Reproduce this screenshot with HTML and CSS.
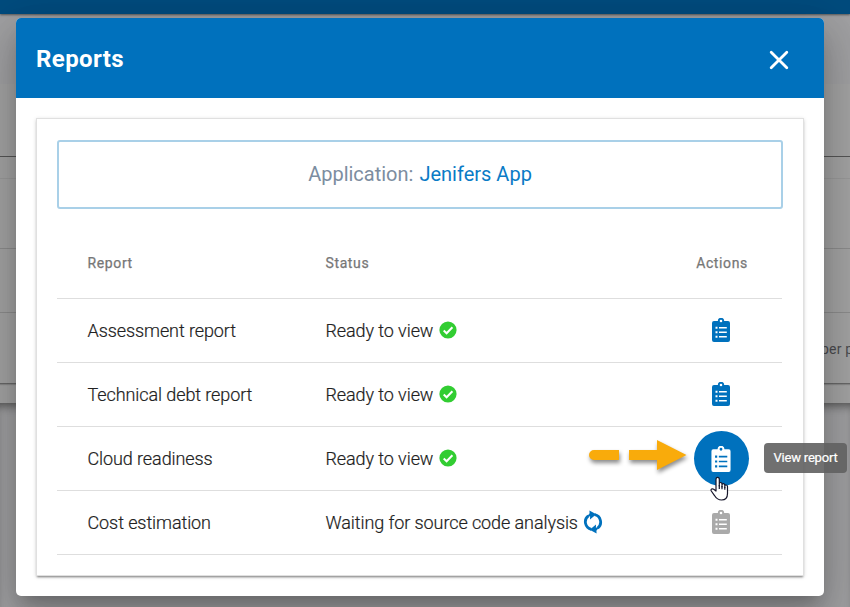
FILE: index.html
```html
<!DOCTYPE html>
<html lang="en">
<head>
<meta charset="utf-8">
<title>Reports</title>
<link rel="stylesheet" href="styles.css">
</head>
<body>
<svg class="sprite" aria-hidden="true">
  <symbol id="clipboard" viewBox="0 0 18 24">
    <path fill-rule="evenodd" d="M2 3H5.800A3.200 3.200 0 0 1 12.200 3H16A2 2 0 0 1 18 5V22A2 2 0 0 1 16 24H2A2 2 0 0 1 0 22V5A2 2 0 0 1 2 3ZM9 1.700A1.300 1.300 0 1 0 9 4.300A1.300 1.300 0 1 0 9 1.700ZM3.500 8.800H5.500V10.800H3.500ZM7 9H14.800V10.500H7ZM3.500 13.300H5.500V15.300H3.500ZM7 13.500H14.800V15H7ZM3.500 17.800H5.500V19.800H3.500ZM7 18H14.800V19.500H7Z"/>
  </symbol>
  <symbol id="check" viewBox="0 0 18 18">
    <circle cx="9" cy="9" r="8.600" fill="#32cd32"/>
    <path d="M4.700 9.600L7.600 12.300L13.400 6.300" fill="none" stroke="#fff" stroke-width="2"/>
  </symbol>
</svg>
<div class="page">
  <div class="topbar"></div>
  <div class="strip intro"></div>
  <div class="strip filter"></div>
  <div class="strip spacer"></div>
  <div class="strip row"></div>
  <div class="strip row short"></div>
  <div class="strip paginator">per page</div>
  <div class="strip bottom"></div>
  <div class="rest"></div>
</div>
<div class="overlay">
  <section class="dialog">
    <header class="dialog-header">
      <h1>Reports</h1>
      <svg class="close" viewBox="0 0 20 20"><path d="M2.200 2.200L17.800 17.800M17.800 2.200L2.200 17.800"/></svg>
    </header>
    <div class="dialog-body">
      <div class="card">
        <div class="application"><span>Application:</span> <b>Jenifers App</b></div>
        <div class="table">
          <div class="tr th"><span>Report</span><span>Status</span><span class="action">Actions</span></div>
          <div class="tr"><span>Assessment report</span><span class="status">Ready to view <svg class="check"><use href="#check"/></svg></span><span class="action"><svg class="clip"><use href="#clipboard"/></svg></span></div>
          <div class="tr"><span>Technical debt report</span><span class="status">Ready to view <svg class="check"><use href="#check"/></svg></span><span class="action"><svg class="clip"><use href="#clipboard"/></svg></span></div>
          <div class="tr"><span>Cloud readiness</span><span class="status">Ready to view <svg class="check"><use href="#check"/></svg></span><span class="action"><span class="round"><svg class="clip" viewBox="0 0 18 24"><use href="#clipboard" width="18" height="24"/></svg></span></span></div>
          <div class="tr"><span>Cost estimation</span><span class="status">Waiting for source code analysis
            <svg class="sync" viewBox="0 0 20 24"><path d="M8.300 19.300A7.600 7.600 0 0 1 5.300 5.900M11.700 4.700A7.600 7.600 0 0 1 14.700 18.100" fill="none" stroke="#0071bd" stroke-width="2.800"/><path d="M6.400 .4L13.300 4.300L7 9.400L7.100 6.200L3.300 7.400L6.600 3.200ZM13.600 23.600L6.700 19.700L13 14.600L12.900 17.800L16.700 16.600L13.400 20.800Z" fill="#0071bd"/></svg></span><span class="action"><svg class="clip disabled"><use href="#clipboard"/></svg></span></div>
        </div>
      </div>
    </div>
  </section>
</div>
<svg class="arrow" viewBox="0 0 100 36"><path d="M6 13H31V23H6A5 5 0 0 1 6 13ZM41 13H69V3L98.500 18L69 33V23H41Z"/></svg>
<svg class="cursor" viewBox="0 0 20 26"><path d="M6 15V3.400C6 .7 9.300 .7 9.300 3.400V10V8C9.300 6 12 6 12 8.200V11V9C12 7 14.800 7.300 14.800 9.200V11.500V10C14.800 8.400 17.500 8.700 17.500 10.500V17.500C17.500 21.500 15.500 24 11.500 24C8 24 6.500 22.800 4.700 19.800L1.300 15C.2 13.200 2.400 12.300 3.700 13.300Z"/><path d="M9.300 9V13M12 10V13.300M14.800 11V13.800"/></svg>
<div class="tooltip">View report</div>
</body>
</html>
```
FILE: styles.css
```css
* { box-sizing: border-box; }
body { margin: 0; width: 850px; height: 607px; overflow: hidden; font-family: Roboto, sans-serif; }
.sprite { position: absolute; width: 0; height: 0; }
.page { height: 607px; background: #a0a0a1; }
.topbar { height: 14px; background: #004b7d; box-shadow: 0 1px 2px #555; position: relative; }
.strip { background: #a3a3a3; }
.intro { height: 70px; background: #a0a0a2; }
.filter { height: 73px; border-bottom: 1px solid #555; }
.spacer { height: 22px; border-bottom: 1px solid #999; }
.row { height: 70px; border-bottom: 1px solid #8c8c8c; }
.row.short { height: 64px; }
.paginator { height: 71px; padding-left: 821px; font-size: 14px; line-height: 72px; letter-spacing: .2px; white-space: nowrap; color: #4b4b4f; border-bottom: 1px solid #686868; box-shadow: 0 1px 1px #888; position: relative; }
.bottom { height: 19px; }
.rest { height: 204px; background: #a0a0a2; box-shadow: inset 0 8px 10px -5px #555; }
.overlay { position: absolute; inset: 0; width: 850px; padding: 18px 26px 11px 16px; }
.dialog { height: 578px; border-radius: 5px; background: #fff; box-shadow: 0 11px 15px -7px rgba(0,0,0,.2), 0 24px 38px 3px rgba(0,0,0,.14), 0 9px 46px 8px rgba(0,0,0,.12); }
.dialog-header { height: 80px; padding: 0 35px 0 20px; display: flex; align-items: center; justify-content: space-between; background: #0071bd; color: #fff; border-radius: 5px 5px 0 0; }
h1 { margin: 2px 0 0; font-size: 24px; font-weight: 700; line-height: 32px; letter-spacing: .4px; }
.close { width: 20px; height: 20px; margin-top: 4px; fill: none; stroke: #fff; stroke-width: 2.800; stroke-linecap: round; }
.dialog-body { padding: 20px; }
.card { height: 458px; padding: 21px 20px; border: 1px solid #e0e0e0; box-shadow: 0 2px 2px -1px rgba(0,0,0,.45), 0 1px 4px rgba(0,0,0,.15); }
.application { height: 69px; padding-bottom: 2px; border: 2px solid #a9d0e8; border-radius: 3px; display: flex; align-items: center; justify-content: center; gap: 6px; font-size: 20px; color: #7c8da0; }
.application b { font-weight: 400; color: #0a7bc6; }
.table { margin-top: 18px; }
.tr { height: 64px; padding-left: 30.500px; display: grid; grid-template-columns: 238px 362px 1fr; align-items: center; border-bottom: 1px solid #dedede; font-size: 18px; font-weight: 300; letter-spacing: -.09px; color: #222; -webkit-text-stroke: .2px #222; margin-right: 1px; }
.tr.th { height: 72px; font-size: 14px; font-weight: 400; letter-spacing: .62px; color: #777; -webkit-text-stroke: .25px #777; }
.status { display: flex; align-items: center; gap: 6px; white-space: nowrap; }
.check { width: 18px; height: 18px; margin-top: -2px; }
.sync { width: 20px; height: 24px; margin: -2px 0 0 -1px; }
.action { width: 60px; margin-left: 3.500px; display: flex; justify-content: center; }
.th .action { margin-left: 4.500px; }
.clip { width: 18px; height: 24px; margin-top: -2px; fill: #0071bd; flex: none; }
.clip.disabled { fill: #aaa; }
.round { width: 55px; height: 55px; margin: -5px 0; border-radius: 50%; display: flex; align-items: center; justify-content: center; background: #0071bd; }
.round .clip { width: 20px; height: 26px; margin-top: 0; fill: #fff; }
.arrow { position: absolute; left: 588px; top: 437px; width: 100px; height: 36px; overflow: visible; fill: #f9ab0b; filter: drop-shadow(1px 3px 2px rgba(0,0,0,.45)); }
.cursor { position: absolute; left: 710px; top: 476px; width: 20px; height: 26px; fill: #fff; stroke: #15152a; stroke-width: 1.200; stroke-linejoin: round; }
.tooltip { position: absolute; left: 764px; top: 443px; width: 83px; height: 30px; border-radius: 4px; background: rgba(97,97,97,.9); color: #fff; font-size: 13px; line-height: 29px; letter-spacing: -.2px; -webkit-text-stroke: .2px #fff; text-align: center; }
```
